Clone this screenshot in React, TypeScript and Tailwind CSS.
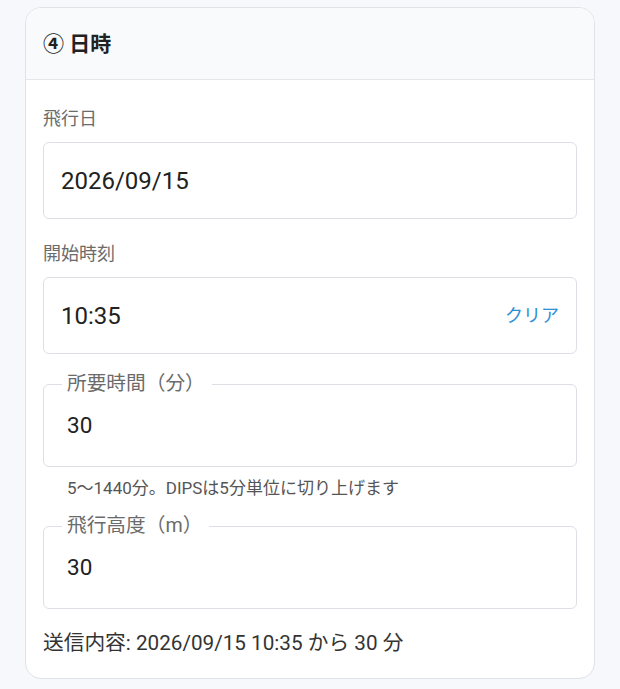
import React from "react";

const font = { fontFamily: 'Roboto, "Noto Sans CJK JP", sans-serif' };

function Label({ children }: { children: React.ReactNode }) {
  return <div className="text-[18px] leading-6 text-[#6b6b6b] mb-[11px]">{children}</div>;
}

function Outlined({ label, value }: { label: string; value: string }) {
  return (
    <fieldset className="border border-[#dcdfe4] rounded-[6px] pl-[18px] pr-4 pb-[27px]">
      <legend className="pl-[5px] pr-[7px] text-[19.7px] leading-6 text-[#6b6b6b]">{label}</legend>
      <div className="pl-[5px] pt-[15px] text-[22.5px] leading-7 text-[#222]">{value}</div>
    </fieldset>
  );
}

export default function App() {
  return (
    <div className="min-h-screen bg-[#f6f8fb] px-[25px] pt-[7px] pb-3" style={font}>
      <div className="bg-white border border-[#dfe2e7] rounded-[16px] overflow-hidden">
        <div className="bg-[#f9fafc] border-b border-[#e3e6ea] h-[72px] flex items-center px-[17px] pt-[2px]">
          <h2 className="text-[21px] font-bold text-[#222]">④ 日時</h2>
        </div>

        <div className="px-[17px] pt-[27px] pb-[23px]">
          <Label>飛行日</Label>
          <div className="h-[77px] border border-[#dcdfe4] rounded-[6px] flex items-center px-[17px] text-[24px] text-[#222]">
            2026/09/15
          </div>

          <div className="mt-[23px]">
            <Label>開始時刻</Label>
            <div className="h-[77px] border border-[#dcdfe4] rounded-[6px] flex items-center justify-between px-[17px]">
              <span className="text-[24px] text-[#222]">10:35</span>
              <button className="text-[18px] text-[#2f8fd5]">クリア</button>
            </div>
          </div>

          <div className="mt-[18px]">
            <Outlined label="所要時間（分）" value="30" />
            <p className="mt-[11px] pl-6 text-[17px] leading-5 text-[#555]">
              5〜1440分。DIPSは5分単位に切り上げます
            </p>
          </div>

          <div className="mt-[16px]">
            <Outlined label="飛行高度（m）" value="30" />
          </div>

          <p className="mt-[22px] text-[20.7px] leading-6 text-[#333]">
            送信内容: 2026/09/15 10:35 から 30 分
          </p>
        </div>
      </div>
    </div>
  );
}
